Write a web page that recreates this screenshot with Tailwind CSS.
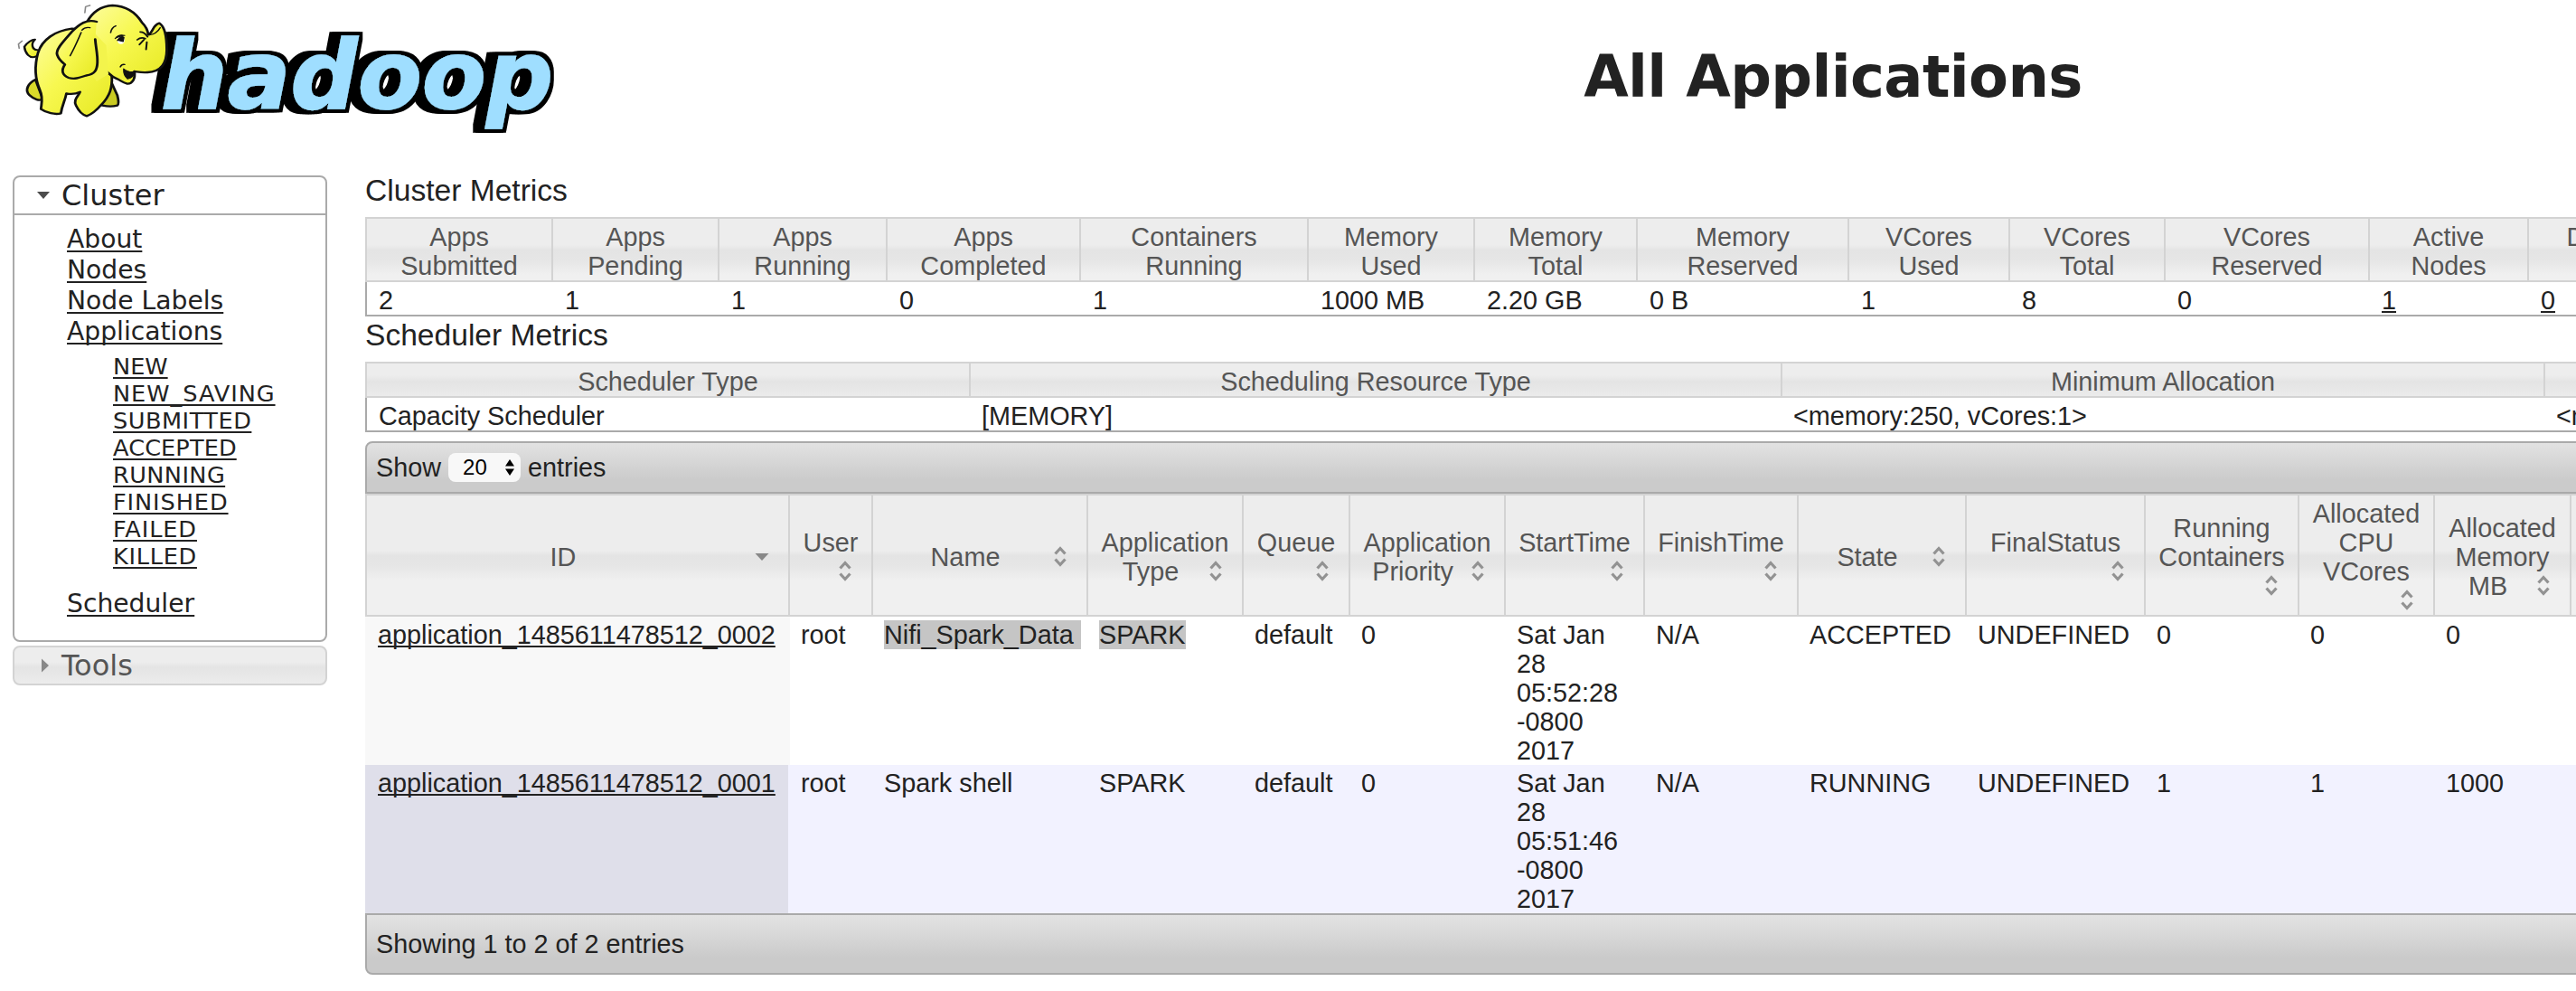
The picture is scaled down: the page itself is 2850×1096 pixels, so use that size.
<!DOCTYPE html>
<html lang="en">
<head>
<meta charset="utf-8">
<title>All Applications</title>
<script src="https://cdn.jsdelivr.net/npm/@tailwindcss/browser@4"></script>
</head>
<body class="w-[2850px] h-[1096px] overflow-hidden bg-white text-[#222] font-['Liberation_Sans',Arial,sans-serif] text-[28.8px] leading-[32px]">

<svg class="hidden">
  <symbol id="sort" viewBox="0 0 32 32"><path d="M9.5 12.5 L15 6.5 L20.5 12.5 M9.5 18.5 L15 24.5 L20.5 18.5" fill="none" stroke="#929292" stroke-width="3.2"/></symbol>
  <symbol id="desc" viewBox="0 0 32 32"><path d="M7.5 12 H22.5 L15 20 Z" fill="#888"/></symbol>
</svg>

<header class="flex h-[194px]">
  <svg class="w-[640px] h-[160px] shrink-0" viewBox="0 0 640 160">
    <defs>
      <filter id="extrude" x="-10%" y="-30%" width="120%" height="160%">
        <feMorphology in="SourceAlpha" operator="dilate" radius="3.5" result="fat"/>
        <feOffset in="fat" dx="-3" result="s1"/>
        <feOffset in="fat" dx="-6" result="s2"/>
        <feOffset in="fat" dx="-9" result="s3"/>
        <feMerge><feMergeNode in="s3"/><feMergeNode in="s2"/><feMergeNode in="s1"/><feMergeNode in="fat"/><feMergeNode in="SourceGraphic"/></feMerge>
      </filter>
      <filter id="tint" x="-10%" y="-30%" width="120%" height="160%">
        <feFlood flood-color="#000" result="black"/>
        <feMorphology in="SourceAlpha" operator="dilate" radius="3.5" result="fat"/>
        <feComposite in="black" in2="fat" operator="in"/>
      </filter>
      <linearGradient id="skin" x1="0" y1="0" x2="1" y2="1"><stop offset="0" stop-color="#fdfda0"/><stop offset=".45" stop-color="#f7f850"/><stop offset="1" stop-color="#e6e820"/></linearGradient>
    </defs>
    <text x="178" y="119.5" textLength="434" lengthAdjust="spacingAndGlyphs" font-family="DejaVu Sans, sans-serif" font-weight="bold" font-style="oblique" font-size="106" fill="#9fdeff" stroke="#9fdeff" stroke-width="1.5" filter="url(#extrude)">hadoop</text>
    <g transform="scale(.40816 .33333)" fill="url(#skin)" stroke="#111" stroke-width="7" stroke-linejoin="round" stroke-linecap="round">
      <path d="M98 187 C80 197 68 176 66 155 C74 140 88 130 95 131 C82 146 88 165 101 166" stroke-width="6"/>
      <path d="M96 264 C78 275 65 298 80 316 C92 330 108 336 116 328 Z" fill="#d9da2a"/>
      <path d="M300 268 L318 316 Q324 345 318 350 Q300 356 278 350 L262 330 Z" fill="#c9ca22"/>
      <path d="M195 95 C150 102 115 130 103 175 C93 220 95 262 108 298 C118 325 112 345 111 362 C125 374 150 382 165 376 C168 350 176 335 180 310 C192 313 205 312 217 305 C212 320 198 330 206 350 C214 370 225 382 235 385 C252 378 266 360 275 347 C298 318 305 290 303 252 L250 100 Z"/>
      <path d="M235 75 C250 40 275 20 305 18 C345 20 370 45 385 75 C396 88 400 98 402 115 C416 108 412 84 432 77 C446 88 452 125 452 165 C452 205 440 238 400 240 C385 242 372 238 364 237 C368 262 358 279 345 278 C334 275 328 268 318 262 C302 255 294 242 288 236 L240 200 Z"/>
      <path d="M236 84 L288 150 L294 246 L262 270 L225 210 Z" stroke="none" fill="#f3f44c"/>
      <path d="M262 72 C235 62 215 80 195 105 C170 140 150 165 155 182 C160 200 170 208 176 214 C164 235 170 250 186 258 C202 264 215 258 235 250 C257 246 263 232 264 208 C265 180 260 160 258 130" stroke="none"/>
      <path d="M262 72 C235 62 215 80 195 105 C170 140 150 165 155 182 C160 200 170 208 176 214 C164 235 170 250 186 258 C202 264 215 258 235 250 C257 246 263 232 264 208 C265 180 260 160 258 130" fill="none"/>
      <path d="M222 100 C228 92 236 90 244 92 M220 108 C212 130 204 155 190 185" fill="none" stroke-width="4"/>
      <path d="M335 228 C345 238 355 240 365 238 Q362 258 346 262 Q334 250 335 228 Z" fill="#111" stroke-width="3"/>
      <path d="M326 222 Q330 212 338 214 M300 108 Q302 92 314 86 M405 116 Q425 112 434 92" fill="none" stroke-width="4"/>
      <ellipse cx="328" cy="133" rx="10" ry="13" fill="#fff" stroke="none"/>
      <path d="M312 128 Q322 112 338 118 M318 134 Q328 116 336 124 L334 138 L322 134 Z" fill="#111" stroke-width="3"/>
      <path d="M380 106 Q392 106 400 122 M372 132 Q382 122 394 128 M378 148 L390 132 M398 140 L396 164" fill="none" stroke-width="5"/>
      <path d="M230 42 L232 22 L244 18 M52 160 L50 146 L60 136" fill="none" stroke="#888" stroke-width="4"/>
    </g>
  </svg>
  <h1 class="w-[2776px] shrink-0 pt-[48px] text-center font-['DejaVu_Sans',Verdana,sans-serif] font-bold text-[64px] leading-[74px] tracking-[-0.65px] whitespace-nowrap">All Applications</h1>
</header>

<div class="flex">
  <aside class="ml-[14px] w-[348px] shrink-0 font-['DejaVu_Sans',Verdana,sans-serif]">
    <section class="h-[516px] rounded-lg border-2 border-[#aaa]">
      <h3 class="flex h-[42px] items-center border-b-2 border-[#aaa] pl-[24px] text-[32px] leading-[40px]">
        <svg class="mr-[12px] h-4 w-4" viewBox="0 0 16 16"><path d="M1 4 H15 L8 12 Z" fill="#4c4c4c"/></svg>Cluster</h3>
      <ul class="pt-[10px] pl-[58px] text-[28.2px] leading-[34px] underline decoration-2 underline-offset-[3px] [text-decoration-skip-ink:none]">
        <li><a>About</a></li>
        <li><a>Nodes</a></li>
        <li><a>Node Labels</a></li>
        <li><a>Applications</a></li>
      </ul>
      <ul class="pt-[6px] pl-[109px] text-[25.6px] leading-[30px] underline decoration-2 underline-offset-[3px] [text-decoration-skip-ink:none]">
        <li><a>NEW</a></li>
        <li class="tracking-[0.95px]"><a>NEW_SAVING</a></li>
        <li class="tracking-[0.5px]"><a>SUBMITTED</a></li>
        <li class="tracking-[0.1px]"><a>ACCEPTED</a></li>
        <li class="tracking-[0.4px]"><a>RUNNING</a></li>
        <li class="tracking-[0.9px]"><a>FINISHED</a></li>
        <li class="tracking-[0.9px]"><a>FAILED</a></li>
        <li class="tracking-[0.7px]"><a>KILLED</a></li>
      </ul>
      <p class="pt-[21px] pl-[58px] text-[28.2px] leading-[34px] underline decoration-2 underline-offset-[3px] [text-decoration-skip-ink:none]"><a>Scheduler</a></p>
    </section>
    <h3 class="mt-1 flex h-[44px] items-center rounded-lg border-2 border-[#d3d3d3] bg-[linear-gradient(#ededed_calc(50%_-_4px),#e4e4e4_calc(50%_+_2px),#ececec)] pl-[26px] text-[32px] leading-[40px] text-[#555]">
      <svg class="mr-[10px] h-4 w-4" viewBox="0 0 16 16"><path d="M4 0.5 V15.5 L12 8 Z" fill="#888"/></svg>Tools</h3>
  </aside>

  <main class="ml-[42px] w-[2446px] overflow-hidden">
    <h3 class="h-[46px] text-[33.6px] leading-[33px]">Cluster Metrics</h3>
    <table class="w-[2700px] table-fixed border-separate border-spacing-0 [&_th]:border-y-2 [&_th]:border-r-2 [&_th]:border-[#d3d3d3] [&_th]:pt-1 [&_th]:font-normal [&_th]:text-[#555] [&_th]:bg-[linear-gradient(#ededed_calc(50%_-_5px),#e4e4e4_calc(50%_+_1px),#e6e6e6_calc(50%_+_12px),#f0f0f0_calc(50%_+_28px))] [&_th:first-child]:border-l-2 [&_td]:border-b-2 [&_td]:border-[#aaa] [&_td]:pt-1 [&_td]:pl-[13px] [&_td:first-child]:border-l-2 [&_td:first-child]:pl-[13px]">
      <colgroup><col class="w-[208px]"><col class="w-[184px]"><col class="w-[186px]"><col class="w-[214px]"><col class="w-[252px]"><col class="w-[184px]"><col class="w-[180px]"><col class="w-[234px]"><col class="w-[178px]"><col class="w-[172px]"><col class="w-[226px]"><col class="w-[176px]"><col class="w-[306px]"></colgroup>
      <tr><th>Apps<br>Submitted</th><th>Apps<br>Pending</th><th>Apps<br>Running</th><th>Apps<br>Completed</th><th>Containers<br>Running</th><th>Memory<br>Used</th><th>Memory<br>Total</th><th>Memory<br>Reserved</th><th>VCores<br>Used</th><th>VCores<br>Total</th><th>VCores<br>Reserved</th><th>Active<br>Nodes</th><th>Decommissioned<br>Nodes</th></tr>
      <tr><td>2</td><td>1</td><td>1</td><td>0</td><td>1</td><td>1000 MB</td><td>2.20 GB</td><td>0 B</td><td>1</td><td>8</td><td>0</td><td><a class="underline decoration-2 underline-offset-[2px]">1</a></td><td><a class="underline decoration-2 underline-offset-[2px]">0</a></td></tr>
    </table>

    <h3 class="h-[50px] text-[33.6px] leading-[41px]">Scheduler Metrics</h3>
    <table class="w-[3256px] table-fixed border-separate border-spacing-0 [&_th]:border-y-2 [&_th]:border-r-2 [&_th]:border-[#d3d3d3] [&_th]:pt-1 [&_th]:font-normal [&_th]:text-[#555] [&_th]:bg-[linear-gradient(#ededed_calc(50%_-_5px),#e4e4e4_calc(50%_+_2px),#ebebeb)] [&_th:first-child]:border-l-2 [&_td]:border-b-2 [&_td]:border-[#aaa] [&_td]:pt-1 [&_td]:pl-3 [&_td:first-child]:border-l-2 [&_td:first-child]:pl-[13px]">
      <colgroup><col class="w-[670px]"><col class="w-[898px]"><col class="w-[844px]"><col class="w-[844px]"></colgroup>
      <tr><th>Scheduler Type</th><th>Scheduling Resource Type</th><th>Minimum Allocation</th><th>Maximum Allocation</th></tr>
      <tr><td>Capacity Scheduler</td><td>[MEMORY]</td><td>&lt;memory:250, vCores:1&gt;</td><td>&lt;memory:2250, vCores:8&gt;</td></tr>
    </table>

    <div class="mt-[10px] flex h-[58px] w-[2700px] items-center rounded-tl-lg border-2 border-[#aaa] bg-[linear-gradient(#e2e2e2,#cbcbcb_75%)] pl-[10px]">
      <span>Show</span>
      <span class="ml-[8px] flex h-8 w-20 items-center rounded-lg bg-[#f8f8f8] pl-4 text-[24px] text-black">20
        <svg class="ml-[19px] h-5 w-3" viewBox="0 0 12 20"><path d="M1 8.5 L6 1 L11 8.5 Z M1 11.5 L6 19 L11 11.5 Z" fill="#000"/></svg>
      </span>
      <span class="ml-[8px]">entries</span>
    </div>

    <table class="w-[2594px] table-fixed border-separate border-spacing-0 whitespace-nowrap [&_th]:h-[136px] [&_th]:border-y-2 [&_th]:border-r-2 [&_th]:border-[#d3d3d3] [&_th]:px-3 [&_th]:pt-1 [&_th]:pb-0 [&_th]:font-normal [&_th]:text-[#555] [&_th]:bg-[linear-gradient(#ededed_calc(50%_-_5px),#e4e4e4_calc(50%_+_1px),#e6e6e6_calc(50%_+_12px),#f0f0f0_calc(50%_+_28px))] [&_th:first-child]:border-l-2 [&_th_svg]:float-right [&_th_svg]:size-8 [&_td]:h-[164px] [&_td]:pt-1 [&_td]:pl-3 [&_td]:align-top [&_td:first-child]:pl-[14px]">
      <colgroup><col class="w-[470px]"><col class="w-[92px]"><col class="w-[238px]"><col class="w-[172px]"><col class="w-[118px]"><col class="w-[172px]"><col class="w-[154px]"><col class="w-[170px]"><col class="w-[186px]"><col class="w-[198px]"><col class="w-[170px]"><col class="w-[150px]"><col class="w-[151px]"><col class="w-[153px]"></colgroup>
      <tr>
        <th>ID<svg><use href="#desc"/></svg></th>
        <th>User<br><svg><use href="#sort"/></svg></th>
        <th>Name<svg><use href="#sort"/></svg></th>
        <th>Application<br>Type<svg><use href="#sort"/></svg></th>
        <th>Queue<br><svg><use href="#sort"/></svg></th>
        <th>Application<br>Priority<svg><use href="#sort"/></svg></th>
        <th>StartTime<br><svg><use href="#sort"/></svg></th>
        <th>FinishTime<br><svg><use href="#sort"/></svg></th>
        <th>State<svg><use href="#sort"/></svg></th>
        <th>FinalStatus<br><svg><use href="#sort"/></svg></th>
        <th>Running<br>Containers<br><svg><use href="#sort"/></svg></th>
        <th>Allocated<br>CPU<br>VCores<br><svg><use href="#sort"/></svg></th>
        <th>Allocated<br>Memory<br>MB<svg><use href="#sort"/></svg></th>
        <th></th>
      </tr>
      <tr>
        <td class="bg-[#f8f8f8] bg-clip-padding"><a class="underline decoration-2 underline-offset-[2px] [text-decoration-skip-ink:none]">application_1485611478512_0002</a></td>
        <td>root</td>
        <td><span class="inline-block h-8 w-[218px] bg-[#c5c5c5] align-top">Nifi_Spark_Data</span></td>
        <td><span class="inline-block h-8 w-24 bg-[#c5c5c5] align-top">SPARK</span></td>
        <td>default</td><td>0</td>
        <td>Sat Jan<br>28<br>05:52:28<br>-0800<br>2017</td>
        <td>N/A</td><td>ACCEPTED</td><td>UNDEFINED</td><td>0</td><td>0</td><td>0</td><td></td>
      </tr>
      <tr class="bg-[#f2f2ff]">
        <td class="border-r-2 border-[#f2f2ff] bg-[#dfdfea]"><a class="underline decoration-2 underline-offset-[2px] [text-decoration-skip-ink:none]">application_1485611478512_0001</a></td>
        <td>root</td><td>Spark shell</td><td>SPARK</td><td>default</td><td>0</td>
        <td>Sat Jan<br>28<br>05:51:46<br>-0800<br>2017</td>
        <td>N/A</td><td>RUNNING</td><td>UNDEFINED</td><td>1</td><td>1</td><td>1000</td><td></td>
      </tr>
    </table>

    <div class="flex h-[68px] w-[2700px] items-center rounded-bl-lg border-2 border-[#aaa] bg-[linear-gradient(#e3e3e3,#cacaca_75%)] pl-[10px]">Showing 1 to 2 of 2 entries</div>
  </main>
</div>
</body>
</html>
